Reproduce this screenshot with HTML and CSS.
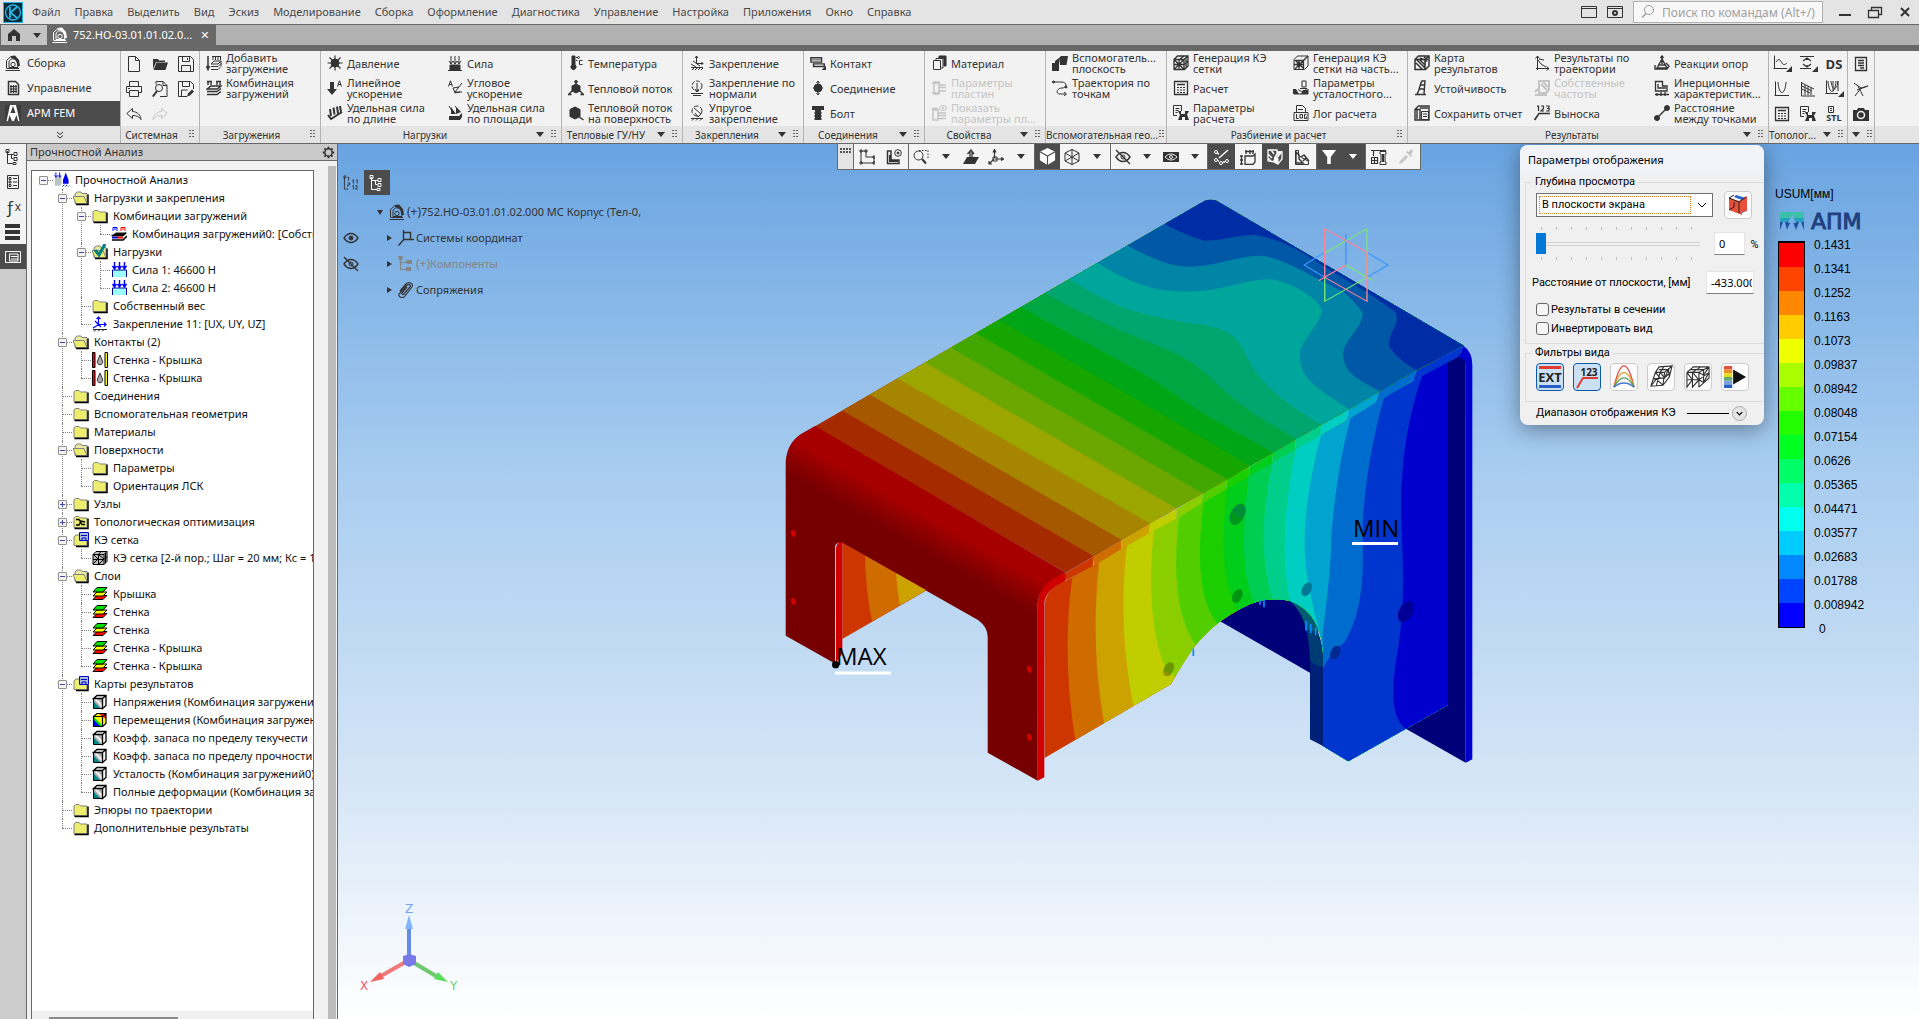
FILE: index.html
```html
<!DOCTYPE html>
<html lang="ru">
<head>
<meta charset="utf-8">
<title>752.НО-03.01.01.02.000 МС Корпус</title>
<link rel="stylesheet" href="styles.css">
</head>
<body>
<svg class="sprite" aria-hidden="true">
  <symbol id="asm" viewBox="0 0 16 16"><path d="M1.500 13V5.500L6 1.500M1.500 13.500H14M.500 15.500H15" /><path d="M4 12.500V7C5 3 10 3 12 6l1 6.500z"/><path d="M6 1l4-.500 4 4.500 1 6h-2.500C12.500 7 11 4 6 3z" fill="currentColor" stroke="none"/><circle cx="8" cy="9.500" r="2.200"/></symbol>
  <symbol id="mgmt" viewBox="0 0 16 16"><path d="M3.500 1.500h7l3 3v10h-10z" stroke-width="1.500"/><path d="M5 6.500h7M5 9h7M5 11.500h7M6 5v8M8.500 5v8M11 5v8" stroke-width="1.200"/></symbol>
  <symbol id="apm" viewBox="0 0 16 16"><path d="M0 0h16v16H0z" fill="#fff" stroke="none"/><path d="M0 0h5L1.500 16H0zM16 0h-5l3.500 16H16zM8 1L5.500 8h5zM4.500 10L7 16H3zM11.500 10L13 16H9z" fill="#3c3c3c" stroke="none"/></symbol>
  <symbol id="new" viewBox="0 0 16 16"><path d="M2.500.5h7l4 4v11h-11zM9.500.5v4h4"/></symbol>
  <symbol id="open" viewBox="0 0 16 16"><path d="M1 3h5l1 1.500h6V6H4L1 13zM4.500 6.500H16L13.500 14H1.500z" fill="currentColor" stroke="none"/></symbol>
  <symbol id="save" viewBox="0 0 16 16"><path d="M.500.500h12l3 3v12H.500zM4.500.500v5h7v-5M3.500 15.500v-6h9v6M9.500 2v2"/></symbol>
  <symbol id="print" viewBox="0 0 16 16"><path d="M3.500 5V.500h9V5M3.500 11.500H.500v-6h15v6h-3M3.500 9.500h9v6h-9zM2 7.500h2"/></symbol>
  <symbol id="preview" viewBox="0 0 16 16"><path d="M4 3.500V.500h7l4 4v11H8M11 .500v4h4"/><circle cx="7" cy="7" r="3.500"/><path d="M5 10L.800 15.500" stroke-width="2"/></symbol>
  <symbol id="saveas" viewBox="0 0 16 16"><path d="M9 15.500H.500V.500h12l3 3V8M4.500.500v5h7v-5M3.500 15v-6h6"/><path d="M9 15.500l1-3 4-4 2 2-4 4z" fill="currentColor" stroke="none"/></symbol>
  <symbol id="undo" viewBox="0 0 16 16"><path d="M6.500 2.500L.800 7.500l5.700 5V9.500c4 0 6.500 1 8.500 4C14.500 9 11.500 5.800 6.500 5.500z"/></symbol>
  <symbol id="addload" viewBox="0 0 16 16"><path d="M2 1v13M.500 11L2 14.500 3.500 11" stroke-width="1.500"/><path d="M6 1.500h9M7 1v4M9.500 1v4M12 1v4M14.500 1v4M5 9l3-3h7l-3 3zM5 11.500h7l3-3M5 14.500h7l3-3M15 6v5"/></symbol>
  <symbol id="combo" viewBox="0 0 16 16"><path d="M1 1.500h5M10 1.500h5M2 1v4M5 1v4M11 1v4M14 1v4" stroke-width="1.400"/><path d="M1 9l4-3h10l-4 3zM1 11.500h10l4-3M1 14.500h10l4-3" stroke-width="1.400"/></symbol>
  <symbol id="press" viewBox="0 0 16 16"><circle cx="8" cy="8" r="4" fill="currentColor"/><path d="M8 .500v15M.500 8h15M2.500 2.500l11 11M13.500 2.500l-11 11" stroke-width="1.200"/></symbol>
  <symbol id="force" viewBox="0 0 16 16"><path d="M3 10h10v5H3z" fill="currentColor"/><path d="M4 1v8M8 1v8M12 1v8M2 6l2 3 2-3M6 6l2 3 2-3M10 6l2 3 2-3M1 15.500h14"/></symbol>
  <symbol id="linacc" viewBox="0 0 16 16"><path d="M3 2h4v7h3l-5 6-5-6h3z" fill="currentColor" stroke="none"/><path d="M10.500 6.500L12.500.800l2 5.700M11 4.500h3"/></symbol>
  <symbol id="angacc" viewBox="0 0 16 16"><path d="M1.500 6.500L3.500.800l2 5.700M2 4.500h3M15 3L8 12h7M6 8l2 5 5-1M6 8l6-1"/></symbol>
  <symbol id="flen" viewBox="0 0 16 16"><path d="M1 10l3 4L15 7M3 4l1 7M6.500 2.500l1 7M10 1.500l1 7M13 1l1 6" stroke-width="2"/></symbol>
  <symbol id="farea" viewBox="0 0 16 16"><path d="M2 11h10l3-3v4l-2 3H2zM4 2l5 7H4zM9 2l5 5-5 2z" fill="currentColor" stroke="none"/><path d="M2 1l5 8M8 1l5 6"/></symbol>
  <symbol id="temp" viewBox="0 0 16 16"><path d="M4 1h3v9a2.500 2.500 0 1 1-3 0z" fill="currentColor"/><path d="M14.500 5.500h-3v4h3M8 2.500h2M8 5.500h1.500"/><circle cx="10.500" cy="2.500" r="1"/></symbol>
  <symbol id="heat" viewBox="0 0 16 16"><path d="M8 4l4 2v5l-4 2-4-2V6z" fill="currentColor"/><path d="M8 5V.500M6.500 2.500L8 .500l1.500 2M4 11l-3.500 3.500h3M12 11l3.500 3.500h-3" stroke-width="1.500"/></symbol>
  <symbol id="heats" viewBox="0 0 16 16"><path d="M7 2l5 2.500v7L7 14l-5-2.500v-7z" fill="currentColor"/><path d="M10 11l5.500 4M7 2v4" stroke-width="1.500"/></symbol>
  <symbol id="fix" viewBox="0 0 16 16"><path d="M7.500 9V1M6 3l1.500-2L9 3M7.500 8.500H14M12.500 7L14 8.500 12.500 10M4 6l7 5M2 12.500h12M3 15l2-2M6 15l2-2M9 15l2-2M12 15l2-2M2 9l5 3"/></symbol>
  <symbol id="fixn" viewBox="0 0 16 16"><circle cx="8" cy="6" r="5" stroke-dasharray="4 1.500"/><path d="M8 3v9M6 9l2 3 2-3M2 13.500h12M4 15.500h8"/></symbol>
  <symbol id="fixe" viewBox="0 0 16 16"><circle cx="8" cy="6" r="5" stroke-dasharray="5 1.500"/><path d="M5 3l7 6-3 3-3-4M2 13.500h12M3 15.500l2-2M7 15.500l2-2M11 15.500l2-2"/></symbol>
  <symbol id="contact" viewBox="0 0 18 16"><path d="M1 2h12v5H1zM4 9h12v3H4z" stroke-width="1.600"/><path d="M2 4.500h10"/><path d="M18 11v5h-5z" fill="currentColor" stroke="none"/></symbol>
  <symbol id="joint" viewBox="0 0 16 16"><circle cx="8" cy="8" r="4" fill="currentColor"/><path d="M8 1v14M3 8h10M6.500 3L8 1l1.500 2M6.500 13L8 15l1.500-2"/></symbol>
  <symbol id="bolt" viewBox="0 0 16 16"><path d="M2 1h12v4h-3v10H5V5H2z" fill="currentColor" stroke="none"/><path d="M4 8h8M4 11h8M4 14h8"/></symbol>
  <symbol id="mat" viewBox="0 0 16 16"><path d="M2.500 5.500h7v9h-7zM5 5V3.500h7V13h-2"/><path d="M8 1h7v10h-2V3H8z" fill="currentColor"/></symbol>
  <symbol id="plate" viewBox="0 0 16 16"><path d="M3 2h5v12H3zM1 3h8M1 13h8M8 5h7M8 7.500h7M8 11h7" stroke-width="1.500"/></symbol>
  <symbol id="platev" viewBox="0 0 16 16"><path d="M2 5h5v10H2zM1 3.500h6M7 8h8M7 10.500h8M7 13.500h8" stroke-width="1.500"/><ellipse cx="12" cy="3" rx="3.500" ry="2.500"/><circle cx="12" cy="3" r=".800"/></symbol>
  <symbol id="auxpl" viewBox="0 0 16 16"><path d="M0 8h7v8H0zM7 3l2-2h7l-1.500 9H8zM3 6l4-3v5H3z" fill="currentColor" stroke="none"/></symbol>
  <symbol id="traj" viewBox="0 0 16 16"><path d="M1 2h8c7 0 6 6 1 6S3 14 8 14h6M12 12l2.500 2-2.500 2"/><circle cx="1.500" cy="2" r="1" fill="currentColor"/><circle cx="14" cy="7" r="1" fill="currentColor"/></symbol>
  <symbol id="mesh" viewBox="0 0 16 16"><path d="M1 4.500h10v10H1zM1 4.500L4.500 1H15v10l-3.500 3.500M11 4.500L15 1M1 4.500l10 10M11 4.500l-10 10M6 4.500v10M1 9.500h10l4-3.500M7 4l4-3M13 3v10" stroke-width="1.300"/></symbol>
  <symbol id="mesh2" viewBox="0 0 16 16"><path d="M1 4.500L4.500 1H15v10l-3.500 3.500H1z"/><path d="M1.500 5.500h9v9M2 14l9-9M3 6l8 8M1 9.500h9M6 5v10M11 5l4-4" stroke-width="1.300"/><circle cx="6" cy="9.500" r="2"/></symbol>
  <symbol id="calc" viewBox="0 0 16 16"><path d="M1.500 1.500h13v13h-13zM4 4.500h8" stroke-width="1.300"/><path d="M4 7.500h8M4 10h8M4 12.500h8" stroke-dasharray="2 1"/></symbol>
  <symbol id="pcalc" viewBox="0 0 16 16"><path d="M8.500 6V.500h-8v10H4M2.500 3.500h4M2.500 5.500h3M2.500 7.500h2"/><path d="M5 6h3v3h4V6h4l-2 3.500L16 15h-4v-3H9v3H5l2-5z" fill="currentColor" stroke="none"/></symbol>
  <symbol id="fat" viewBox="0 0 16 16"><path d="M9 1h4v6H9zM7 8.500h7l-4 4L5 9.500M1 14h14V9"/><path d="M0 9h3l3 5H0zM10 10h5v4H8z" fill="currentColor" stroke="none"/></symbol>
  <symbol id="log" viewBox="0 0 16 16"><path d="M3.500 7V.500h6l3 3V7M1 7.500h14v8H1zM5 4.500h5M3.500 9v4.500h2M7 9.500h2.500v3.500H7zM13.500 9.500h-2v4h2v-2"/></symbol>
  <symbol id="map" viewBox="0 0 16 16"><path d="M1 4.500h10v10H1zM1 4.500L4.500 1H15v10l-3.500 3.500M11 4.500L15 1M2 8l6 6M3 5l8 8M6 5l5 5M6 3l7 3M10 2l4 3" stroke-width="1.500"/></symbol>
  <symbol id="stab" viewBox="0 0 16 16"><path d="M1 14.500h11M3 14C6 11 5 5 8 1h3l-1 13M6 5h4M5 9h5" stroke-width="1.400"/></symbol>
  <symbol id="rep" viewBox="0 0 16 16"><path d="M1 4.500L4.500 1H15v14H1zM1 4.500h5v10M3 5v9M6 3h8" stroke-width="1.400"/><path d="M7.500 6.500h7v8h-7zM9 9h4M9 11.500h4"/></symbol>
  <symbol id="restr" viewBox="0 0 16 16"><path d="M3.500 15V1M1.500 3.500l2-2.500 2 2.500M2 13.500h13M12.500 11.500l2.500 2-2.500 2M4 5l3 4 5 3M5 4l5 1"/></symbol>
  <symbol id="eig" viewBox="0 0 16 16"><path d="M5 1h10v9l-3 3H5zM7 4l6 6M9 2l5 5M1 15h12M1 12l4-4" stroke-width="2"/></symbol>
  <symbol id="callout" viewBox="0 0 16 16"><path d="M.500 15L5 8.500h11" stroke-width="1.600"/><path d="M3 1.500L4.500 1v5M7 1h2.500v2.500L7 6h3M12 1h3v5h-3M13 3.500h2" stroke-width="1.200"/></symbol>
  <symbol id="react" viewBox="0 0 16 16"><path d="M8 4L3 13h10zM1 10v4h12l2-3-3-3M8 1v8M6.500 3L8 1l1.500 2M5 10h6" stroke-width="1.400"/></symbol>
  <symbol id="inert" viewBox="0 0 16 16"><path d="M1.500 1.500h7V6H13v5H1.500zM4 4v4h8M1 14.500h14M3 13v3M7 12v4M11 12v4" stroke-width="1.300"/></symbol>
  <symbol id="dist" viewBox="0 0 16 16"><path d="M3 13L13 3" stroke-width="1.500"/><circle cx="3" cy="13" r="2.500" fill="currentColor"/><circle cx="13" cy="3" r="2.500" fill="currentColor"/></symbol>
  <symbol id="g1" viewBox="0 0 19 17"><path d="M1.500.5v13M.5 13.500H14M3 7c3-5 5-1 6 1s3 2 5 0"/><path d="M19 11v6h-6z" fill="currentColor" stroke="none"/></symbol>
  <symbol id="g2" viewBox="0 0 19 17"><path d="M1 1.500h14M1 13.500h11M4 6l4-3 4 3M4 9l4 3 4-3M8 3v2M8 10v2" stroke-width="1.200"/><path d="M19 11v6h-6z" fill="currentColor" stroke="none"/></symbol>
  <symbol id="g3" viewBox="0 0 16 16"><path d="M1.500.5v14M.5 14.500H15M4 1c1 14 7 14 8 0"/></symbol>
  <symbol id="g4" viewBox="0 0 16 16"><path d="M1.500 1v14H15M2 2l12 6M2 5l10 5M2 8l8 4M5 4v10M8 5v9M11 7v7"/></symbol>
  <symbol id="g5" viewBox="0 0 19 17"><path d="M1.500.5v13M.5 13.500H13M3 1c1 14 7 14 8 0M6 1c1 10 6 10 7 0M8 1v10M13 1v10"/><path d="M19 11v6h-6z" fill="currentColor" stroke="none"/></symbol>
  <symbol id="stl" viewBox="0 0 8 8"><path d="M1.500.5h5v6h-5zM3 2.500h2M3 4.500h2"/></symbol>
  <symbol id="doc" viewBox="0 0 16 16"><path d="M2.500 1.500h11v13h-11zM5 4.500h6M5 7h6M5 9.500h6M7 12h4" stroke-width="1.300"/></symbol>
  <symbol id="tri" viewBox="0 0 16 16"><path d="M1 2l7 5 7-2M8 7l-6 8M5 5l5 10M4 9l11-4"/></symbol>
  <symbol id="cam" viewBox="0 0 16 16"><path d="M0 4h4l1-2h6l1 2h4v11H0z" fill="currentColor" stroke="none"/><circle cx="8" cy="9" r="3.500" stroke="#f2f2f2" stroke-width="1.500"/></symbol>
  <symbol id="gear" viewBox="0 0 16 16"><circle cx="8" cy="8" r="4.500" stroke-width="1.800"/><path d="M8 1v2.500M8 12.500V15M1 8h2.500M12.500 8H15M3 3l2 2M11 11l2 2M13 3l-2 2M5 11l-2 2" stroke-width="2.200"/></symbol>
  <symbol id="tree" viewBox="0 0 16 16"><path d="M2.500 2v12.500h5M2.500 5.500h6M8.500 9.500h-2V5"/><path d="M1 .5h3v3H1zM9 3.500h3v3H9zM9 8.500h3v3H9zM8 13.500h3v2H8z"/></symbol>
  <symbol id="props" viewBox="0 0 16 16"><path d="M2.500 1.500h11v13h-11zM8 4.500h4M8 8h4M8 11.500h4M4 3.500h2v2H4zM4 7h2v2H4zM4 10.500h2v2H4z"/></symbol>
  <symbol id="bars" viewBox="0 0 16 16"><path d="M0 0h15v4H0zM0 6h15v4H0zM0 12h15v4H0z" fill="currentColor" stroke="none"/></symbol>
  <symbol id="panel" viewBox="0 0 16 16"><path d="M.5 2.500h15v11H.5zM4.500 5v7M4.500 5H13v7H4.500M6 7.500h7M6 10h7"/></symbol>
  <symbol id="numtree" viewBox="0 0 17 16"><path d="M1.500 2v12.500h4M1 .5h2v2H1zM5 2.500l1-1v4M5 8h2v2H5v2M10 5l1-.5v4M14 5l1-.5v4M10 11l1-.5v4M13 11h2v1.500l-2 2h2.500"/></symbol>
  <symbol id="eye" viewBox="0 0 16 12"><path d="M1 6c4-6 10-6 14 0-4 6-10 6-14 0z" stroke-width="1.400"/><circle cx="8" cy="6" r="2" fill="currentColor"/></symbol>
  <symbol id="eyeoff" viewBox="0 0 16 16"><path d="M1 8c4-6 10-6 14 0-4 6-10 6-14 0zM1 1l14 14" stroke-width="1.400"/><circle cx="8" cy="8" r="2"/></symbol>
  <symbol id="csys" viewBox="0 0 16 16"><path d="M5.500 2.500h7v7h-7zM5.500 0v10L.5 15.500M5 9.500h11" stroke-width="1.400"/></symbol>
  <symbol id="comp" viewBox="0 0 16 16"><path d="M2.500 2v11.500h6M2.500 6.500h8" stroke-width="1.200"/><path d="M0 0h5l-1 4H1zM8 4h6v4H9zM8 11h5v4H8z" fill="currentColor" stroke="none"/></symbol>
  <symbol id="clip" viewBox="0 0 16 16"><path d="M2 9l6-7c3-3 8 0 6 3l-7 9c-2 3-7 1-6-2l8-9c2-1 4 0 3 2l-6 7c-1 1-3 0-2-1l5-6" stroke-width="1.200"/></symbol>
  <symbol id="t1" viewBox="0 0 16 16"><path d="M2 2v12h13V8H7V2z"/><path d="M1 1h2v2H1zM6 1h2v2H6zM1 13h2v2H1zM14 13h2v2h-2zM14 7h2v2h-2z"/></symbol>
  <symbol id="t2" viewBox="0 0 16 16"><path d="M1.500 2v12.500H13V11H5V2z" stroke-width="1.500"/><path d="M3 6h2v5h7v2H3z" fill="currentColor" stroke="none"/><circle cx="12" cy="4" r="3.300"/><circle cx="12" cy="4" r="1" fill="currentColor"/></symbol>
  <symbol id="t3" viewBox="0 0 16 16"><circle cx="5.500" cy="6.500" r="4.500"/><path d="M9 10l4 4.500" stroke-width="2"/><path d="M6 1.500h9v9" stroke-dasharray="1.500 1.500"/></symbol>
  <symbol id="t4" viewBox="0 0 16 16"><path d="M4 8h12l-4 7H0z" fill="currentColor" stroke="none"/><path d="M7 11V2M4.500 5L8 1l3 4M9 11V3" stroke-width="1.300"/></symbol>
  <symbol id="t5" viewBox="0 0 16 16"><path d="M6.500 9.500V2M5 3.500l1.500-3L8 3.500M7 10h8M13 8.500l2.500 1.500-2.500 1.500M6 10l-5 5M1 12v3h3" stroke-width="1.200"/><path d="M5 8h4v4H5z"/></symbol>
  <symbol id="cube" viewBox="0 0 20 20"><path d="M10 1l8 4v9l-8 5-8-5V5z" fill="#fff" stroke="none"/><path d="M2 5l8 4.500L18 5M10 9.500V19" stroke="#4c4c4c" stroke-width="1.200"/></symbol>
  <symbol id="cubew" viewBox="0 0 16 16"><path d="M8 .5l7 3.500v8l-7 3.500L1 12V4zM1 4l7 4 7-4M8 8v8M1 12l7-4 7 4M8 0v8"/></symbol>
  <symbol id="t6" viewBox="0 0 16 16"><path d="M0 3h16v10H0z" fill="currentColor" stroke="none"/><path d="M2 8c4-4 8-4 12 0-4 4-8 4-12 0z" stroke="#f2f2f2"/><circle cx="8" cy="8" r="1.500" stroke="#f2f2f2"/></symbol>
  <symbol id="t7" viewBox="0 0 16 16"><circle cx="3" cy="3" r="1.500"/><circle cx="3" cy="11" r="1.500"/><circle cx="8" cy="14" r="1.500"/><circle cx="14" cy="12" r="1.500"/><path d="M6 9l9-8M4 4l2 1M5 12h1M10 13h2" stroke-width="1.400"/></symbol>
  <symbol id="t8" viewBox="0 0 16 16"><path d="M5 7h8l2-2v8l-2 2.500H5zM5 2.500h9M6 1v4M10 1v4M13 1v4M1.500 7v8M0 7h3M0 15h3M0 11h3" stroke-width="1.300"/></symbol>
  <symbol id="t9" viewBox="0 0 16 16"><path d="M1 1h9v12l-9-1zM1 5l4 4M1 9l3 3M4 1l3 4M8 8l3-5h4v7l-4 5-4-2z" stroke-width="1.300"/><path d="M8 8l3 1v6l-4-2zM11 3h4l-4 5z" fill="currentColor"/></symbol>
  <symbol id="t10" viewBox="0 0 16 16"><path d="M1.500 1.500h3v5l10 6v3h-13z"/><path d="M2 3l3 3v4l4 4H2zM7 8l3-2 5 6M9 12l3-3" stroke-width="1.400"/></symbol>
  <symbol id="funnel" viewBox="0 0 18 18"><path d="M1 1h16l-6 8v8H7V9z" fill="currentColor" stroke="none"/></symbol>
  <symbol id="t11" viewBox="0 0 16 16"><path d="M0 1.500h15M2.500 2v5M.5 8.500h6v6h-6zM.5 11.500h6M3.500 8.500v6" stroke-width="1.200"/><path d="M9 2.500h6V5h-1v8h1v2.500H9V13h1V5H9z"/><path d="M12 5v8" stroke-width="2"/></symbol>
  <symbol id="pip" viewBox="0 0 16 16"><path d="M1 15l1-3 6-6 2 2-6 6zM8 3l5 5 1-1-1.500-1.500C16 3 15 0 13 .5L10.500 3 9 2z" fill="currentColor" stroke="none"/></symbol>
  <symbol id="fold" viewBox="0 0 16 16"><path d="M1 13.500V4l1.500-1.500H6L7.500 4H14v9.500z" fill="#eeee6e" stroke="#808080"/><path d="M1.500 14.500H15V4.500" stroke="#000" stroke-width="1.500"/></symbol>
  <symbol id="fopen" viewBox="0 0 16 16"><path d="M2 13.500V4l2-2h4L9 3.500h5v10z" fill="#e9e9a0" stroke="#808080"/><path d="M0 6.500h11l3 7H3z" fill="#eeee6e" stroke="#808080"/><path d="M3 14.500h12V4.500" stroke="#000" stroke-width="1.500"/></symbol>
  <symbol id="fsave" viewBox="0 0 16 16"><path d="M1 13.500V5l2-2h5v4h6v6.500z" fill="#eeee6e" stroke="#808080"/><path d="M6.500.5h9v8h-9z" fill="#a9b9d9" stroke="#00c"/><path d="M8 3.500h6M9 8V6h4v2" stroke="#00c"/><path d="M3 14.500h12V9" stroke="#000" stroke-width="1.500"/></symbol>
  <symbol id="fcheck" viewBox="0 0 16 16"><use href="#fopen"/><path d="M3 6l4 5 6-11" stroke="#008080" stroke-width="3"/></symbol>
  <symbol id="ftopo" viewBox="0 0 16 16"><use href="#fold"/><path d="M3 5.500h3l3 5h3M3 11h3l2-4 4 1" stroke="#000" stroke-width="1.300"/></symbol>
  <symbol id="root" viewBox="0 0 17 16"><path d="M1 5l3-1h4v9l-3 1H1z" fill="#b8c4c4" stroke="none"/><path d="M2 0v5M6 0v5M.5 3L2 5l1.500-2M4.500 3L6 5l1.500-2" stroke="#00f"/><path d="M12.500 0l3 8v4h-6V8z" fill="#00e" stroke="none"/><path d="M9 15l2-2M12 15l2-2M15 15l1-1" stroke="#00c"/></symbol>
  <symbol id="ldcomb" viewBox="0 0 16 16"><path d="M2 5V1.500h4V5M4 1v3" stroke="#00f"/><path d="M10 5V1.500h4V5M12 1v3" stroke="red"/><path d="M1 9.500l4-3h11l-4 3z" fill="#111" stroke="none"/><path d="M1 10.500h6v2H1z" fill="#00c" stroke="none"/><path d="M7 10.500h5v2H7z" fill="red" stroke="none"/><path d="M1 14h11l4-4M.5 9.500h11.500l3-2.500" stroke="#000" stroke-width="1.600"/></symbol>
  <symbol id="ld" viewBox="0 0 16 16"><path d="M1.500 15V8h14v7" fill="#9ff" stroke="#008"/><path d="M3.500 0v7M8.500 0v7M13.500 0v7M1.500 4l2 3 2-3M6.500 4l2 3 2-3M11.500 4l2 3 2-3" stroke="#00f" stroke-width="1.400"/></symbol>
  <symbol id="fixb" viewBox="0 0 16 16"><path d="M6.500 10V1M4.500 3l2-2 2 2M6.500 8.500H14M12 6.500l2 2-2 2M6 9l-5 3M3 5l6 6" stroke="#00f" stroke-width="1.200"/><path d="M1 13.500h14M2 15.500l2-2M6 15.500l2-2M10 15.500l2-2" stroke="#222"/></symbol>
  <symbol id="cont" viewBox="0 0 16 16"><path d="M.5.5h2.500v15H.5z" fill="red" stroke="#000"/><path d="M13 .5h2.500v15H13z" fill="#ff0" stroke="#000"/><path d="M8 3l2.500 6a2.700 2.700 0 1 1-5 0z" fill="#aaa" stroke="#333"/></symbol>
  <symbol id="grid" viewBox="0 0 16 16"><path d="M1 4.500L4 1.500h11v10L12 14.500H1z" fill="#bbb" stroke="#000"/><path d="M1 4.500h11v10M12 4.500l3-3M1 9.500h11l3-3M6.500 4.500v10M6.500 4.500L9 1.500M1 14l5-5M7 14l5-5M2 5l4 4M7 5l5 4M13.500 3v10" stroke="#000"/></symbol>
  <symbol id="lay" viewBox="0 0 16 16"><path d="M1 13.500l4-4h10l-4 4z" fill="red" stroke="#000"/><path d="M1 10l4-4h10l-4 4z" fill="#ff0" stroke="#000"/><path d="M1 6l4-4.500h10L11 6z" fill="#0d0" stroke="#000"/></symbol>
  <symbol id="res" viewBox="0 0 16 16"><path d="M1.500 4.500h9v10h-9z" fill="#aaa" stroke="#000"/><path d="M2 8l6 6H2z" fill="#088" stroke="none"/><path d="M2 5h3l5 5v4z" fill="#eee" stroke="none"/><path d="M1.500 4.500L5 1.500h9v10l-3.500 3v-10zM10.500 4.500L14 1.500" fill="#f4f4f4" stroke="#000" stroke-width="1.300"/></symbol>
  <symbol id="resc" viewBox="0 0 16 16"><path d="M1.500 4.500L5 1.500h9v10l-3.500 3h-9z" fill="#ff0" stroke="none"/><path d="M2 7l7 7H2z" fill="#00f" stroke="none"/><path d="M2 5l9 9H8L2 8z" fill="#0d0" stroke="none"/><path d="M7 2h7v5z" fill="red" stroke="none"/><path d="M1.500 4.500h9v10h-9zM1.500 4.500L5 1.500h9v10l-3.500 3M10.500 4.500L14 1.500" stroke="#000" stroke-width="1.200"/></symbol>
</svg>

<header>
  <nav class="menubar">
    <svg class="logo" viewBox="0 0 20 21"><path d="M0 0h20v21H0z" fill="#0d2a3a" stroke="#28b8e8" stroke-width="2"/><circle cx="10" cy="10.500" r="7.500" stroke="#28b8e8" stroke-width="1.300"/><path d="M7 5v11M14 5l-6.500 5.500L14 16" stroke="#28b8e8" stroke-width="1.800"/></svg>
    <button>Файл</button><button>Правка</button><button>Выделить</button><button>Вид</button><button>Эскиз</button><button>Моделирование</button><button>Сборка</button><button>Оформление</button><button>Диагностика</button><button>Управление</button><button>Настройка</button><button>Приложения</button><button>Окно</button><button>Справка</button>
    <div class="winctl">
      <svg class="i" viewBox="0 0 16 16"><path d="M.5 2.500h15v11H.5zM.5 4.500h15"/></svg>
      <svg class="i" viewBox="0 0 16 16"><path d="M.5 2.500h15v11H.5zM.5 4.500h15"/><circle cx="8" cy="9" r="2" stroke-width="2"/></svg>
      <label class="search"><svg class="i" viewBox="0 0 16 16"><circle cx="9" cy="6" r="4.500"/><path d="M6 9.500l-4 4" stroke-width="1.500"/></svg><input type="text" placeholder="Поиск по командам (Alt+/)" aria-label="Поиск"></label>
      <svg class="i wb" viewBox="0 0 16 16"><path d="M2 11h12" stroke-width="2"/></svg>
      <svg class="i wb" viewBox="0 0 16 16"><path d="M1.500 6.500h10v7h-10zM4.500 6V3.500h10v7H12M1 6.500h11" stroke-width="1.300"/></svg>
      <svg class="i wb" viewBox="0 0 16 16"><path d="M4 4l8 8M12 4l-8 8" stroke-width="2"/></svg>
    </div>
  </nav>
  <div class="tabs">
    <button class="home" aria-label="Домой"><svg class="i" viewBox="0 0 16 16"><path d="M2 7l6-5 6 5v7h-4V9H6v5H2z" fill="currentColor" stroke="none"/></svg><span class="caret"></span></button>
    <button class="tab"><svg class="i"><use href="#asm"/></svg><span>752.НО-03.01.01.02.0...</span><b>✕</b></button>
  </div>
  <div class="ribbon">
    <section class="modes">
      <button><svg class="i"><use href="#asm"/></svg>Сборка</button>
      <button><svg class="i"><use href="#mgmt"/></svg>Управление</button>
      <button class="on"><svg class="i"><use href="#apm"/></svg>APM FEM</button>
      <footer><svg class="i" viewBox="0 0 16 16"><path d="M5 5l3 2.500L11 5M5 8.500l3 2.500 3-2.500"/></svg></footer>
    </section>
    <section class="tools w2">
      <div class="ic3"><button aria-label="Создать"><svg class="i"><use href="#new"/></svg></button><button aria-label="Открыть"><svg class="i"><use href="#open"/></svg></button><button aria-label="Сохранить"><svg class="i"><use href="#save"/></svg></button><button aria-label="Печать"><svg class="i"><use href="#print"/></svg></button><button aria-label="Просмотр"><svg class="i"><use href="#preview"/></svg></button><button aria-label="Сохранить как"><svg class="i"><use href="#saveas"/></svg></button><button aria-label="Отменить"><svg class="i"><use href="#undo"/></svg></button><button class="off" aria-label="Повторить"><svg class="i flip"><use href="#undo"/></svg></button></div>
      <footer><span>Системная</span><i class="dots"></i></footer>
    </section>
    <section class="w3">
      <div class="cells"><button><svg class="i"><use href="#addload"/></svg><span>Добавить<br>загружение</span></button><button><svg class="i"><use href="#combo"/></svg><span>Комбинация<br>загружений</span></button></div>
      <footer><span>Загружения</span><i class="dots"></i></footer>
    </section>
    <section class="w6">
      <div class="cells"><button><svg class="i"><use href="#press"/></svg><span>Давление</span></button><button><svg class="i"><use href="#linacc"/></svg><span>Линейное<br>ускорение</span></button><button><svg class="i"><use href="#flen"/></svg><span>Удельная сила<br>по длине</span></button><button><svg class="i"><use href="#force"/></svg><span>Сила</span></button><button><svg class="i"><use href="#angacc"/></svg><span>Угловое<br>ускорение</span></button><button><svg class="i"><use href="#farea"/></svg><span>Удельная сила<br>по площади</span></button></div>
      <footer><span>Нагрузки</span><i class="caret"></i><i class="dots"></i></footer>
    </section>
    <section class="w3">
      <div class="cells"><button><svg class="i"><use href="#temp"/></svg><span>Температура</span></button><button><svg class="i"><use href="#heat"/></svg><span>Тепловой поток</span></button><button><svg class="i"><use href="#heats"/></svg><span>Тепловой поток<br>на поверхность</span></button></div>
      <footer><span>Тепловые ГУ/НУ</span><i class="caret"></i><i class="dots"></i></footer>
    </section>
    <section class="w3">
      <div class="cells"><button><svg class="i"><use href="#fix"/></svg><span>Закрепление</span></button><button><svg class="i"><use href="#fixn"/></svg><span>Закрепление по<br>нормали</span></button><button><svg class="i"><use href="#fixe"/></svg><span>Упругое<br>закрепление</span></button></div>
      <footer><span>Закрепления</span><i class="caret"></i><i class="dots"></i></footer>
    </section>
    <section class="w3">
      <div class="cells"><button><svg class="i"><use href="#contact"/></svg><span>Контакт</span></button><button><svg class="i"><use href="#joint"/></svg><span>Соединение</span></button><button><svg class="i"><use href="#bolt"/></svg><span>Болт</span></button></div>
      <footer><span>Соединения</span><i class="caret"></i><i class="dots"></i></footer>
    </section>
    <section class="w3">
      <div class="cells"><button><svg class="i"><use href="#mat"/></svg><span>Материал</span></button><button class="off"><svg class="i"><use href="#plate"/></svg><span>Параметры<br>пластин</span></button><button class="off"><svg class="i"><use href="#platev"/></svg><span>Показать<br>параметры пл...</span></button></div>
      <footer><span>Свойства</span><i class="caret"></i><i class="dots"></i></footer>
    </section>
    <section class="w3">
      <div class="cells"><button><svg class="i"><use href="#auxpl"/></svg><span>Вспомогатель...<br>плоскость</span></button><button><svg class="i"><use href="#traj"/></svg><span>Траектория по<br>точкам</span></button></div>
      <footer class="long"><span>Вспомогательная гео...</span><i class="dots"></i></footer>
    </section>
    <section class="w6">
      <div class="cells"><button><svg class="i"><use href="#mesh"/></svg><span>Генерация КЭ<br>сетки</span></button><button><svg class="i"><use href="#calc"/></svg><span>Расчет</span></button><button><svg class="i"><use href="#pcalc"/></svg><span>Параметры<br>расчета</span></button><button><svg class="i"><use href="#mesh2"/></svg><span>Генерация КЭ<br>сетки на часть...</span></button><button><svg class="i"><use href="#fat"/></svg><span>Параметры<br>усталостного...</span></button><button><svg class="i"><use href="#log"/></svg><span>Лог расчета</span></button></div>
      <footer><span>Разбиение и расчет</span><i class="dots"></i></footer>
    </section>
    <section class="w9">
      <div class="cells"><button><svg class="i"><use href="#map"/></svg><span>Карта<br>результатов</span></button><button><svg class="i"><use href="#stab"/></svg><span>Устойчивость</span></button><button><svg class="i"><use href="#rep"/></svg><span>Сохранить отчет</span></button><button><svg class="i"><use href="#restr"/></svg><span>Результаты по<br>траектории</span></button><button class="off"><svg class="i"><use href="#eig"/></svg><span>Собственные<br>частоты</span></button><button><svg class="i"><use href="#callout"/></svg><span>Выноска</span></button><button><svg class="i"><use href="#react"/></svg><span>Реакции опор</span></button><button><svg class="i"><use href="#inert"/></svg><span>Инерционные<br>характеристик...</span></button><button><svg class="i"><use href="#dist"/></svg><span>Расстояние<br>между точками</span></button></div>
      <footer><span>Результаты</span><i class="caret"></i><i class="dots"></i></footer>
    </section>
    <section class="tools w2">
      <div class="ic3"><button aria-label="График"><svg class="i big"><use href="#g1"/></svg></button><button aria-label="Ограничения"><svg class="i big"><use href="#g2"/></svg></button><button class="ds">DS</button><button aria-label="Кривая"><svg class="i"><use href="#g3"/></svg></button><button aria-label="Ферма"><svg class="i"><use href="#g4"/></svg></button><button aria-label="Кривые"><svg class="i big"><use href="#g5"/></svg></button><button aria-label="Расчет"><svg class="i"><use href="#calc"/></svg></button><button aria-label="Параметры"><svg class="i"><use href="#pcalc"/></svg></button><button class="stl"><svg class="i"><use href="#stl"/></svg>STL</button></div>
      <footer><span>Тополог...</span><i class="caret"></i><i class="dots"></i></footer>
    </section>
    <section class="tools w1">
      <div class="ic3"><button aria-label="Отчет"><svg class="i"><use href="#doc"/></svg></button><button aria-label="Сечение"><svg class="i"><use href="#tri"/></svg></button><button aria-label="Снимок"><svg class="i"><use href="#cam"/></svg></button></div>
      <footer><i class="caret"></i><i class="dots"></i></footer>
    </section>
    <section class="rest"><div></div><footer></footer></section>
  </div>
</header>

<main>
  <nav class="strip">
    <button aria-label="Дерево"><svg class="i"><use href="#tree"/></svg></button>
    <button aria-label="Свойства"><svg class="i"><use href="#props"/></svg></button>
    <button class="fx">ƒ<sub>x</sub></button>
    <button aria-label="Слои"><svg class="i"><use href="#bars"/></svg></button>
    <button class="on" aria-label="Анализ"><svg class="i"><use href="#panel"/></svg></button>
  </nav>
  <aside class="panel">
    <h2><span>Прочностной Анализ</span><svg class="i"><use href="#gear"/></svg></h2>
    <div class="pbody">
      <div class="treebox">
        <ul class="tree">
          <li><div><i class="ex m"></i><svg class="i"><use href="#root"/></svg>Прочностной Анализ</div>
          <ul>
            <li><div><i class="ex m"></i><svg class="i"><use href="#fopen"/></svg>Нагрузки и закрепления</div>
              <ul>
                <li><div><i class="ex m"></i><svg class="i"><use href="#fold"/></svg>Комбинации загружений</div>
                  <ul><li><div><i class="ex"></i><svg class="i"><use href="#ldcomb"/></svg>Комбинация загружений0: [Собственный вес]</div></li></ul></li>
                <li><div><i class="ex m"></i><svg class="i"><use href="#fcheck"/></svg>Нагрузки</div>
                  <ul><li><div><i class="ex"></i><svg class="i"><use href="#ld"/></svg>Сила 1: 46600 Н</div></li><li><div><i class="ex"></i><svg class="i"><use href="#ld"/></svg>Сила 2: 46600 Н</div></li></ul></li>
                <li><div><i class="ex"></i><svg class="i"><use href="#fold"/></svg>Собственный вес</div></li>
                <li><div><i class="ex"></i><svg class="i"><use href="#fixb"/></svg>Закрепление 11: [UX, UY, UZ]</div></li>
              </ul></li>
            <li><div><i class="ex m"></i><svg class="i"><use href="#fopen"/></svg>Контакты (2)</div>
              <ul><li><div><i class="ex"></i><svg class="i"><use href="#cont"/></svg>Стенка - Крышка</div></li><li><div><i class="ex"></i><svg class="i"><use href="#cont"/></svg>Стенка - Крышка</div></li></ul></li>
            <li><div><i class="ex"></i><svg class="i"><use href="#fold"/></svg>Соединения</div></li>
            <li><div><i class="ex"></i><svg class="i"><use href="#fold"/></svg>Вспомогательная геометрия</div></li>
            <li><div><i class="ex"></i><svg class="i"><use href="#fold"/></svg>Материалы</div></li>
            <li><div><i class="ex m"></i><svg class="i"><use href="#fopen"/></svg>Поверхности</div>
              <ul><li><div><i class="ex"></i><svg class="i"><use href="#fold"/></svg>Параметры</div></li><li><div><i class="ex"></i><svg class="i"><use href="#fold"/></svg>Ориентация ЛСК</div></li></ul></li>
            <li><div><i class="ex m p"></i><svg class="i"><use href="#fold"/></svg>Узлы</div></li>
            <li><div><i class="ex m p"></i><svg class="i"><use href="#ftopo"/></svg>Топологическая оптимизация</div></li>
            <li><div><i class="ex m"></i><svg class="i"><use href="#fsave"/></svg>КЭ сетка</div>
              <ul><li><div><i class="ex"></i><svg class="i"><use href="#grid"/></svg>КЭ сетка [2-й пор.; Шаг = 20 мм; Кс = 1]</div></li></ul></li>
            <li><div><i class="ex m"></i><svg class="i"><use href="#fopen"/></svg>Слои</div>
              <ul><li><div><i class="ex"></i><svg class="i"><use href="#lay"/></svg>Крышка</div></li><li><div><i class="ex"></i><svg class="i"><use href="#lay"/></svg>Стенка</div></li><li><div><i class="ex"></i><svg class="i"><use href="#lay"/></svg>Стенка</div></li><li><div><i class="ex"></i><svg class="i"><use href="#lay"/></svg>Стенка - Крышка</div></li><li><div><i class="ex"></i><svg class="i"><use href="#lay"/></svg>Стенка - Крышка</div></li></ul></li>
            <li><div><i class="ex m"></i><svg class="i"><use href="#fsave"/></svg>Карты результатов</div>
              <ul><li><div><i class="ex"></i><svg class="i"><use href="#res"/></svg>Напряжения (Комбинация загружений0)</div></li><li><div><i class="ex"></i><svg class="i"><use href="#resc"/></svg>Перемещения (Комбинация загружений0)</div></li><li><div><i class="ex"></i><svg class="i"><use href="#res"/></svg>Коэфф. запаса по пределу текучести</div></li><li><div><i class="ex"></i><svg class="i"><use href="#res"/></svg>Коэфф. запаса по пределу прочности</div></li><li><div><i class="ex"></i><svg class="i"><use href="#res"/></svg>Усталость (Комбинация загружений0)</div></li><li><div><i class="ex"></i><svg class="i"><use href="#res"/></svg>Полные деформации (Комбинация загружений0)</div></li></ul></li>
            <li><div><i class="ex"></i><svg class="i"><use href="#fold"/></svg>Эпюры по траектории</div></li>
            <li><div><i class="ex"></i><svg class="i"><use href="#fold"/></svg>Дополнительные результаты</div></li>
          </ul></li>
        </ul>
        <div class="hscroll"></div>
      </div>
      <div class="vscroll"></div>
    </div>
  </aside>

  <section class="view">
    <svg class="scene" viewBox="338 144 1581 875" preserveAspectRatio="xMidYMid slice">
      <defs>
        <linearGradient id="roll" gradientUnits="userSpaceOnUse" x1="924" y1="552" x2="940" y2="524"><stop offset="0" stop-color="#760000"/><stop offset=".5" stop-color="#8c0000"/><stop offset="1" stop-color="#a60000"/></linearGradient>
        <clipPath id="top"><path d="M118 740L666 1178 727 1129 849 1030 1018 898 1168 777 1283 688 1430 571 1533 497 995 63Q982 56 968 63Z"/></clipPath>
        <clipPath id="side"><path d="M-167 495L-165 485Q-155 440-105 424L-20 376 63 328 148 278 228 235 305 188 380 145 446 108 516 66 585 27 663-16 745-62 835-118 945-180 1044-240V795L745 964 669 918V640Q667 585 645 545 620 500 570 482 530 473 480 482 430 495 362 543 320 575 287 615 250 665 213 732L-160 950-167 955Z"/></clipPath>
        <clipPath id="inner"><path d="M247 308L498 451 247 595Z"/></clipPath>
      </defs>
      <!-- far wall seen through the arch and the right flange -->
      <g transform="translate(1100 440) scale(.33333)">
        <path d="M350 538L640 704V450H350Z" fill="#000078"/>
        <path d="M1040-235L1085-262Q1097-262 1097-240V968L915 865 1040 780Z" fill="#000078"/>
        <path d="M1090-283Q1117-265 1117-225V958L1097 968V-225Q1095-250 1076-245Z" fill="#0000ce"/>
        <path d="M560 478C600 500 628 560 630 640V898L669 918V640C660 560 620 500 575 482Z" fill="#002078"/>
        <path d="M560 478C600 500 628 560 630 662Q645 678 669 680V640C660 560 620 500 575 482Z" fill="#003c74"/>
        <path d="M560 478Q600 500 622 570L660 575Q640 510 575 482Z" fill="#005c74"/>
      </g>
      <!-- side wall isobands -->
      <g transform="translate(1100 440) scale(.33333)" clip-path="url(#side)">
        <path d="M-200-400H1200V1100H-200Z" fill="#ce3600"/>
        <path d="M-83 410Q-115 640-75 895V1100H1200V-400H-83Z" fill="#ce6c00"/>
        <path d="M-2 362Q-30 610 12 848V1100H1200V-400H-2Z" fill="#cca200"/>
        <path d="M81 316Q52 560 100 797V1100H1200V-400H81Z" fill="#c0ce00"/>
        <path d="M162 268Q135 520 190 670L225 712V1100H1200V-400H162Z" fill="#8ace00"/>
        <path d="M238 225Q205 500 287 615V1100H1200V-400H238Z" fill="#52ce00"/>
        <path d="M312 180Q275 450 350 548V1100H1200V-400H312Z" fill="#1ace00"/>
        <path d="M382 140Q350 400 412 508V1100H1200V-400H382Z" fill="#00ce1a"/>
        <path d="M448 98Q410 370 462 490V1100H1200V-400H448Z" fill="#00ce52"/>
        <path d="M519 62Q465 300 515 475V1100H1200V-400H519Z" fill="#00ce8a"/>
        <path d="M589 20Q530 300 570 482V1100H1200V-400H589Z" fill="#00cec2"/>
        <path d="M666-25Q590 250 625 430 637 500 658 572V1100H1200V-400H666Z" fill="#00a4ce"/>
        <path d="M753-68Q715 60 695 270 693 400 668 575V1100H1200V-400H753Z" fill="#006cce"/>
        <path d="M853-130C815 0 785 180 788 300S785 520 735 605Q690 640 669 685V1100H1200V-400H853Z" fill="#0036ce"/>
        <path d="M968-197C910-30 900 120 905 260S915 480 895 620C870 760 875 830 915 865L940 1100H1200V-400H968Z" fill="#0000ce"/>
      </g>
      <!-- lit edge of the cover -->
      <g transform="translate(1100 440) scale(.33333)">
        <path d="M-102 398L-18 349-22 378-107 424Z" fill="#ce3600"/><path d="M-18 349L65 300 63 328-20 378Z" fill="#ce6c00"/><path d="M65 300L150 250 148 279 63 328Z" fill="#cca200"/><path d="M150 250L231 206 228 236 148 280Z" fill="#c0ce00"/><path d="M231 206L308 160 305 190 228 238Z" fill="#8ace00"/><path d="M308 160L382 117 379 147 305 192Z" fill="#52ce00"/><path d="M382 117L450 80 446 108 379 149Z" fill="#1ace00"/><path d="M450 80L520 38 516 68 446 110Z" fill="#00ce1a"/><path d="M520 38L588-2 585 28 516 70Z" fill="#00ce52"/><path d="M588-2L666-45 662-16 585 30Z" fill="#00ce8a"/><path d="M666-45L747-92 738-60 660-14Z" fill="#00cec2"/><path d="M747-92L838-146 826-112 738-58Z" fill="#00a4ce"/><path d="M838-146L950-209 938-178 826-110Z" fill="#006cce"/><path d="M950-209L1092-283 1076-250 938-176Z" fill="#0036ce"/>
      </g>
      <!-- cover top isobands -->
      <g transform="translate(760 180) scale(.45914 .33333)" clip-path="url(#top)">
        <path d="M118 740L666 1178 1700 1100V0H118Z" fill="#a62a00"/>
        <path d="M180 692L727 1129 1700 1100V0H180Z" fill="#a65800"/>
        <path d="M240 644L788 1080 1700 1100V0H240Z" fill="#a68500"/>
        <path d="M301 596L849 1030 1700 1100V0H301Z" fill="#9ca600"/>
        <path d="M360 548L908 986 1700 1100V0H360Z" fill="#6ca600"/>
        <path d="M416 503L964 940 1700 1100V0H416Z" fill="#42a600"/>
        <path d="M470 459L1018 898 1700 1100V0H470Z" fill="#16a600"/>
        <path d="M521 421Q780 625 1068 858L1700 1100V0H521Z" fill="#00a616"/>
        <path d="M571 382C680 472 820 560 900 640S1040 755 1117 818L1700 1100V0H571Z" fill="#00a642"/>
        <path d="M622 341C720 415 800 460 880 505S980 600 1030 655 1110 730 1168 777L1700 1100V0H622Z" fill="#00a66e"/>
        <path d="M674 297C760 370 800 400 940 430Q1020 440 1045 490C1060 530 1080 590 1120 635Q1160 685 1224 735L1700 1100V0H674Z" fill="#00a69c"/>
        <path d="M735 250C820 318 860 334 930 335 1010 335 1060 295 1115 298 1170 315 1205 350 1224 385 1225 430 1176 480 1176 525 1175 600 1220 630 1283 688L1700 1100V0H735Z" fill="#0085a6"/>
        <path d="M802 198C870 245 890 257 935 260 1000 258 1040 225 1095 227 1150 240 1200 290 1270 335Q1300 370 1313 400C1310 450 1270 480 1270 525 1275 590 1310 600 1349 634L1700 1100V0H802Z" fill="#0058a6"/>
        <path d="M882 133Q930 168 968 182C1020 180 1040 165 1078 165 1130 175 1180 215 1220 252L1320 335Q1365 375 1385 398C1395 440 1368 450 1370 500Q1390 540 1430 571L1700 1100V0H882Z" fill="#002ca6"/>
      </g>
      <!-- front wall -->
      <path d="M815 426L801 434Q787 443 785.700 461.700V635.700L835 663.500V547Q836 541 843 543.500L978 620Q987.700 627 987.700 637V752.700L1037.700 780.700V603Q1040 583 1066 572.700Z" fill="url(#roll)"/>
      <g transform="translate(760 440) scale(.33333)">
        <path d="M247 308L500 451 247 597Z" fill="#ce3600"/>
        <g clip-path="url(#inner)"><path d="M315 300Q312 440 340 560H600V300Z" fill="#ce6c00"/><path d="M408 380Q408 430 424 520H600V300Z" fill="#cca200"/></g>
        <path d="M228 668V325Q232 300 247 309V640Z" fill="#ce0000"/>
        <path d="M918 398Q835 425 833 495V1022L853 1012V490Q857 448 915 424Z" fill="#ce0000"/>
        <g fill="#d00000"><ellipse cx="100" cy="280" rx="7" ry="11" transform="rotate(-20 100 280)"/><ellipse cx="100" cy="484" rx="7" ry="11" transform="rotate(-20 100 484)"/><ellipse cx="808" cy="688" rx="7" ry="11" transform="rotate(-20 808 688)"/><ellipse cx="808" cy="892" rx="7" ry="11" transform="rotate(-20 808 892)"/></g>
        <circle cx="227" cy="674" r="11" fill="#000"/>
      </g>
      <g transform="translate(1100 440) scale(.33333)">
        <ellipse cx="413" cy="223" rx="21" ry="34" transform="rotate(28 413 223)" fill="#008e38"/>
        <path d="M396 218l32 17q-10 20-26 20-14-8-6-37z" fill="#009818"/>
        <ellipse cx="412" cy="468" rx="14" ry="22" transform="rotate(28 412 468)" fill="#009614"/>
        <ellipse cx="620" cy="448" rx="14" ry="22" transform="rotate(28 620 448)" fill="#007896"/>
        <ellipse cx="706" cy="638" rx="14" ry="22" transform="rotate(28 706 638)" fill="#002a92"/>
        <ellipse cx="206" cy="687" rx="14" ry="22" transform="rotate(28 206 687)" fill="#6a9600"/>
        <path d="M190 690l24 14q-8 6-18 3-8-6-6-17z" fill="#929400"/>
        <ellipse cx="918" cy="515" rx="21" ry="34" transform="rotate(28 918 515)" fill="#000096"/>
        <path d="M480 480v14M492 478v24M280 626v22M618 542v30M632 552v28M647 562v24" stroke="#0090ff" stroke-width="5"/>
      </g>
      <!-- origin planes -->
      <g transform="translate(760 180) scale(.45914 .33333)" fill="none" stroke-width="3">
        <path d="M1230 217L1185 255 1230 292M1322 217L1368 255 1322 292M1276 163V255" stroke="#3c96ff"/>
        <path d="M1322 146V292M1322 146L1230 219M1230 292V364L1322 292M1276 255L1335 302" stroke="#78e678"/>
        <path d="M1230 146V292L1322 364V217L1230 146M1276 255L1217 302" stroke="#ff8296"/>
      </g>
      <g class="mark"><text x="836" y="665">MAX</text><path d="M835 673h56" stroke="#fff" stroke-width="3"/><text x="1353" y="537">MIN</text><path d="M1352 543.500h46" stroke="#fff" stroke-width="3"/></g>
      <!-- axes triad -->
      <g>
        <path d="M409 955V928" stroke="#648ce6" stroke-width="4"/><path d="M409 915l4 14h-8z" fill="#82b4fa"/>
        <path d="M409 960L381 976" stroke="#f07878" stroke-width="4"/><path d="M370 982l10-10 4 7z" fill="#f06464"/>
        <path d="M409 960L436 976" stroke="#6ec86e" stroke-width="4"/><path d="M448 982l-14-3 4-7z" fill="#5adc5a"/>
        <path d="M403 956l6-2 7 2v8l-7 3-6-3z" fill="#7878e6"/>
        <g class="axis"><text x="405" y="913" fill="#78a0f0">Z</text><text x="360" y="990" fill="#f05a64">X</text><text x="450" y="990" fill="#6ed26e">Y</text></g>
      </g>
    </svg>

    <div class="mtree">
      <div class="mt-tools"><button aria-label="Нумерация"><svg class="i"><use href="#numtree"/></svg></button><button class="on" aria-label="Структура"><svg class="i"><use href="#tree"/></svg></button></div>
      <ul>
        <li><span class="vis"></span><i class="tri d"></i><svg class="i"><use href="#asm"/></svg><span><small>(+)</small>752.НО-03.01.01.02.000 МС Корпус (Тел-0,</span></li>
        <li class="sub"><span class="vis"><svg class="i"><use href="#eye"/></svg></span><i class="tri"></i><svg class="i"><use href="#csys"/></svg>Системы координат</li>
        <li class="sub"><span class="vis"><svg class="i"><use href="#eyeoff"/></svg></span><i class="tri"></i><span class="dim"><svg class="i"><use href="#comp"/></svg><span><small>(+)</small>Компоненты</span></span></li>
        <li class="sub"><span class="vis"></span><i class="tri"></i><svg class="i"><use href="#clip"/></svg>Сопряжения</li>
      </ul>
    </div>

    <div class="vbar">
      <span class="grip"><i></i></span>
      <div><button aria-label="Контур"><svg class="i"><use href="#t1"/></svg></button><button aria-label="Вид"><svg class="i"><use href="#t2"/></svg></button></div>
      <div class="wide"><button aria-label="Масштаб"><svg class="i"><use href="#t3"/></svg></button><button aria-label="Еще"><i class="caret"></i></button><button aria-label="Нормально к"><svg class="i"><use href="#t4"/></svg></button><button aria-label="Ориентация"><svg class="i"><use href="#t5"/></svg></button><button aria-label="Еще"><i class="caret"></i></button></div>
      <div><button class="on" aria-label="Полутоновое"><svg class="i big"><use href="#cube"/></svg></button><button aria-label="Каркас"><svg class="i"><use href="#cubew"/></svg></button><button aria-label="Еще"><i class="caret"></i></button></div>
      <div><button aria-label="Скрыть"><svg class="i"><use href="#eyeoff"/></svg></button><button aria-label="Еще"><i class="caret"></i></button><button aria-label="Показать"><svg class="i"><use href="#t6"/></svg></button><button aria-label="Еще"><i class="caret"></i></button></div>
      <div class="wide"><button class="on" aria-label="Точки"><svg class="i"><use href="#t7"/></svg></button><button aria-label="Размеры"><svg class="i"><use href="#t8"/></svg></button><button class="on" aria-label="Сечение"><svg class="i"><use href="#t9"/></svg></button><button aria-label="Профиль"><svg class="i"><use href="#t10"/></svg></button></div>
      <div class="dark"><button class="on" aria-label="Фильтр"><svg class="i"><use href="#funnel"/></svg></button><button class="on" aria-label="Еще"><i class="caret"></i></button></div>
      <div class="wide"><button aria-label="Измерить"><svg class="i"><use href="#t11"/></svg></button><button class="off" aria-label="Пипетка"><svg class="i"><use href="#pip"/></svg></button></div>
    </div>

    <form class="dialog">
      <h3>Параметры отображения</h3>
      <fieldset>
        <legend>Глубина просмотра</legend>
        <div class="row"><span class="combo"><select aria-label="Глубина просмотра"><option>В плоскости экрана</option></select><svg class="i" viewBox="0 0 16 16"><path d="M4 6l4 4 4-4"/></svg></span>
          <button type="button" class="sq" aria-label="Сечение"><svg viewBox="0 0 24 24"><path d="M10 2l10 3v13l-4 2V7l-8-3z" fill="#2860c8"/><path d="M3 5l10 3 8-5v15l-5 1v3L3 17z" fill="#e8503c"/><path d="M3 5l10 4v11M13 9l7-5M3 5l5-3M3 17l5-3V9" stroke="#222" fill="none"/></svg></button></div>
        <div class="row sl"><div class="slider"><span class="ticks"></span><input type="range" min="0" max="100" value="0" aria-label="Глубина, %"><span class="ticks"></span></div><label><input type="text" value="0">  %</label></div>
        <label class="row dist">Расстояние от плоскости, [мм]<input type="text" value="-433.0000"></label>
        <label class="chk"><input type="checkbox">Результаты в сечении</label>
        <label class="chk"><input type="checkbox">Инвертировать вид</label>
      </fieldset>
      <fieldset class="flt">
        <legend>Фильтры вида</legend>
        <div class="btns">
          <button type="button" class="sq sel" aria-label="Экстремумы"><svg viewBox="0 0 24 24"><path d="M1 1h22v3H1z" fill="#e03c32"/><path d="M1 20h22v3H1z" fill="#2860c8"/><text x="12" y="17">EXT</text></svg></button>
          <button type="button" class="sq sel" aria-label="Выноски"><svg viewBox="0 0 24 24"><path d="M2 23L8 13h15" stroke="#e03c32" stroke-width="2" fill="none"/><text class="sm" x="14" y="11">123</text></svg></button>
          <button type="button" class="sq" aria-label="Деформации"><svg viewBox="0 0 26 26"><g fill="none" stroke-width="1.500"><path d="M2 24Q13-22 24 24" stroke="#e04c42"/><path d="M2 24Q13-8 24 24" stroke="#e0a030"/><path d="M2 24Q13 4 24 24" stroke="#50a060"/><path d="M2 24Q13 15 24 24" stroke="#4878c8"/></g></svg></button>
          <button type="button" class="sq" aria-label="Сетка деформированная"><svg viewBox="0 0 26 26"><path d="M2 23L7 8h10l-2 14zM7 8l4-6 14-1-8 7M25 1l-3 12-7 9M5 15l12-1 7-7M12 8L8 22M11 5h11M16 2l-4 6M2 23l6-8 7 7M7 8l5 6M12 8l5 6 4-9 1 8" fill="none" stroke="#333" stroke-width="1.200"/></svg></button>
          <button type="button" class="sq" aria-label="Сетка"><svg viewBox="0 0 26 26"><path d="M1 8v16l6-8v8l7-8v8M1 8h13v16M1 8l7-6h17l-11 6M25 2v12l-11 10M1 8l6 8V8l7 8M1 16h13l11-8M19 5v14M14 8l5 3 6-9M14 16l5 3 6-11M4 5h16M16 2L7 8" fill="none" stroke="#333" stroke-width="1.200"/></svg></button>
          <button type="button" class="sq" aria-label="Шкала"><svg viewBox="0 0 26 26"><path d="M1 1h9v4H1z" fill="#e05040"/><path d="M1 5h9v4H1z" fill="#e89020"/><path d="M1 9h9v4H1z" fill="#e8dc20"/><path d="M1 13h9v4H1z" fill="#60a870"/><path d="M1 17h9v4H1z" fill="#80a0d8"/><path d="M1 21h9v4H1z" fill="#2860c8"/><path d="M11 5l14 8-14 8z" fill="#111"/></svg></button>
        </div>
      </fieldset>
      <div class="range"><span>Диапазон отображения КЭ</span><hr><button type="button" class="rnd" aria-label="Развернуть"><svg class="i" viewBox="0 0 16 16"><path d="M4 6l4 4 4-4" stroke-width="1.800"/></svg></button></div>
    </form>

    <div class="legend">
      <p class="lt">USUM[мм]</p>
      <div class="brand"><svg viewBox="0 0 24 18"><path d="M0 0h24v6H0z" fill="#3cc0a8"/><path d="M0 6h24v4H0z" fill="#28a0c0"/><path d="M0 10h3l-3 8zM24 10h-3l3 8zM5 10h6l-3 5-1 3zM13 10h6l-3 8z" fill="#2050a0"/><path d="M12 2l-4 9h8z" fill="#74aee4"/></svg><b>АПМ</b></div>
      <div class="scale">
        <div class="bar"><i style="background:#f00"></i><i style="background:#f40"></i><i style="background:#f80"></i><i style="background:#fc0"></i><i style="background:#ef0"></i><i style="background:#af0"></i><i style="background:#6f0"></i><i style="background:#2f0"></i><i style="background:#0f2"></i><i style="background:#0f6"></i><i style="background:#0fa"></i><i style="background:#0fe"></i><i style="background:#0cf"></i><i style="background:#08f"></i><i style="background:#04f"></i><i style="background:#00f"></i></div>
        <ol><li>0.1431</li><li>0.1341</li><li>0.1252</li><li>0.1163</li><li>0.1073</li><li>0.09837</li><li>0.08942</li><li>0.08048</li><li>0.07154</li><li>0.0626</li><li>0.05365</li><li>0.04471</li><li>0.03577</li><li>0.02683</li><li>0.01788</li><li>0.008942</li><li class="z">0</li></ol>
      </div>
    </div>
  </section>
</main>
</body>
</html>
```
FILE: styles.css
```css
*{box-sizing:border-box}
body{margin:0;height:100vh;display:flex;flex-direction:column;overflow:hidden;font:11px/14px "Noto Sans","Open Sans",sans-serif;color:#333;background:#f2f2f2}
button{font:inherit;color:inherit;background:none;border:0;padding:0;margin:0}
ul,ol{list-style:none;margin:0;padding:0}
.sprite{position:absolute;width:0;height:0}
.i{width:16px;height:16px;flex:none;fill:none;stroke:currentColor;overflow:visible}
.i.big{width:19px;height:19px}
.flip{transform:scaleX(-1)}
.caret{width:0;height:0;border:4px solid transparent;border-top:5px solid #333;border-bottom:0;flex:none}
.dots{width:5px;height:9px;flex:none;background:repeating-linear-gradient(#666 0 1px,transparent 1px 3px);-webkit-mask:linear-gradient(90deg,#000 2px,transparent 2px 3px,#000 3px)}

.menubar{display:flex;align-items:center;height:24px;background:#e4e4e4;padding-left:3px;color:#4a4a4a}
.logo{width:20px;height:21px;fill:none;margin-right:3px}
.menubar>button{padding:0 7px 0 6px}
.menubar>button+button{margin-left:1px}
.winctl{margin-left:auto;display:flex;align-items:center;gap:10px;padding-right:6px;color:#333}
.search{display:flex;align-items:center;gap:6px;width:190px;height:22px;padding:0 6px;border:1px solid #b0b0b0;background:#f8f8f8;color:#999}
.search input{font:12px "Noto Sans",sans-serif;border:0;background:none;width:160px;padding:0;outline:0}
.search input::placeholder{color:#a0a0a0}
.wb{margin-left:4px}
.tabs{display:flex;height:27px;background:#b1b1b1;border-top:1px solid #686868;border-bottom:6px solid #686868}
.home{display:flex;align-items:center;gap:11px;width:47px;background:#c4c4c4;padding-left:5px;border-left:1px solid #686868}
.tab{display:flex;align-items:center;gap:5px;background:#686868;color:#fff;width:169px;padding-left:5px}
.tab b{margin-left:3px;font:700 11px "DejaVu Sans",sans-serif}

.ribbon{display:flex;height:93px;border-bottom:1px solid #686868}
.ribbon section{display:flex;flex-direction:column;border-right:1px solid #b4b4b4;flex:none}
.ribbon footer{display:flex;align-items:center;height:17px;background:#e4e4e4;font-size:10px;padding:0 5px 0 0;gap:7px}
.ribbon footer span{flex:1;text-align:center;white-space:nowrap}
.ribbon .long{gap:1px;padding-right:2px}
.modes{width:121px}
.modes button{height:25px;display:flex;align-items:center;gap:6px;padding:0 0 1px 5px}
.modes .on{background:#4c4c4c;color:#fff}
.ribbon .modes footer{justify-content:center;padding:0}
.w1{width:27px}.w2{width:79px}.w3{width:121px}.w6{width:241px}.w9{width:361px}
.cells{flex:1;display:grid;grid-template-rows:repeat(3,25px);grid-auto-flow:column;grid-auto-columns:120px}
.cells button{display:flex;align-items:center;gap:4px;padding:0 0 1px 6px;text-align:left;line-height:11px;white-space:nowrap;overflow:hidden}
.ic3{flex:1;display:grid;grid-template:repeat(3,25px)/repeat(auto-fill,26px)}
.ic3 button{display:flex;align-items:center;justify-content:center}
.ribbon .w1 footer{padding-left:4px}
.off{color:#c4c4c4}
.ic3 .ds{font:700 13px "Open Sans",sans-serif}
.ic3 .stl{flex-direction:column;font:700 9px/8px "Open Sans",sans-serif}
.ic3 .stl .i{width:8px;height:8px;margin-right:6px}
.ribbon .rest{flex:1;border:0;justify-content:flex-end}

main{flex:1;display:flex;min-height:0}
.strip{width:27px;background:#ccc;border-right:1px solid #686868;display:flex;flex-direction:column;flex:none}
.strip button{height:25px;display:flex;align-items:center;justify-content:center;background:#f2f2f2}
.strip .on{background:#4c4c4c;color:#fff}
.strip .fx{font:17px "Open Sans",sans-serif}
.fx sub{font-size:12px}
.panel{width:311px;flex:none;display:flex;flex-direction:column;border-right:1px solid #686868;background:#f2f2f2}
.panel h2{margin:0;height:17px;font:inherit;display:flex;align-items:center;justify-content:space-between;background:#c9c9c9;border-bottom:1px solid #686868;padding:0 0 0 3px}
.panel h2 .i{width:13px;height:13px;margin-right:2px}
.pbody{flex:1;display:flex;justify-content:space-between;min-height:0;padding-left:4px}
.treebox{margin-top:9px;width:283px;border:1px solid #686868;border-bottom:0;background:#fff;color:#111;display:flex;flex-direction:column;overflow:hidden}
.tree{flex:1;overflow:hidden;padding-left:7px}
.tree ul{margin-left:19px}
.tree li{position:relative;white-space:nowrap}
.tree div{display:flex;align-items:center;height:18px;gap:5px}
.tree div .i{margin-left:1px}
.tree li li::before{content:"";position:absolute;left:4px;top:0;bottom:0;border-left:1px dotted #808080}
.tree li li:last-child::before{bottom:auto;height:9px}
.tree div::before{content:"";position:absolute;left:4px;top:9px;width:10px;border-top:1px dotted #808080}
.ex{width:9px;height:9px;flex:none;position:relative}
.ex.m{background:linear-gradient(#44a,#44a) center/5px 1px no-repeat #f4f4f4;border:1px solid #909090;border-radius:1px}
.ex.p{background:linear-gradient(#44a,#44a) center/5px 1px no-repeat,linear-gradient(#44a,#44a) center/1px 5px no-repeat #f4f4f4}
.hscroll{height:8px;background:#f0f0f0;padding:6px 0 0 17px}
.hscroll::before{content:"";display:block;width:129px;height:2px;background:#8a8a8a}
.vscroll{width:8px;background:#bcbcbc;margin:5px 1px 0 0}

.view{flex:1;position:relative;min-width:0;overflow:hidden;background:linear-gradient(#69a4e1,#a9cdf0 38%,#d6e6f6 74%,#fff);display:flex;justify-content:center;align-items:flex-start}
.scene{position:absolute;inset:0;width:100%;height:100%}
.mark text{font:24px "Open Sans",sans-serif;fill:#000}
.axis text{font:12px "DejaVu Sans",sans-serif}

.mtree{position:absolute;left:5px;top:26px}
.mt-tools{display:flex;gap:5px}
.mt-tools button{height:25px;display:flex;align-items:center}
.mt-tools .on{width:26px;justify-content:center;background:#4c4c4c;color:#fff}
.mtree ul{padding-top:4px}
.mtree li{display:flex;align-items:center;height:26px;gap:2px;white-space:nowrap}
.vis{width:32px;display:flex}
.sub .vis{width:42px}
.tri{width:0;height:0;border:3px solid transparent;border-left:5px solid #333;border-right:0;margin-right:4px}
.tri.d{border:3px solid transparent;border-top:5px solid #333;border-bottom:0}
.mtree small{font-size:12px}
.dim{display:flex;gap:2px;align-items:center;color:#858585}

.vbar{position:relative;display:flex;height:26px;border:1px solid #686868;border-top:0;background:#f4f4f4}
.grip{width:15px;background:#e4e4e4;padding:4px 2px}
.grip i{display:block;height:5px;background:repeating-linear-gradient(90deg,#555 0 2px,transparent 2px 3px);-webkit-mask:linear-gradient(#000 2px,transparent 2px 3px,#000 3px)}
.vbar div{display:flex;border-left:1px solid #686868}
.vbar button{width:27px;display:flex;align-items:center;justify-content:center}
.vbar div:nth-child(3) button{width:25px}
.vbar div:nth-child(4) button{width:25px}
.vbar .on{background:#4c4c4c;color:#fff}
.vbar .on .caret{border-top-color:#fff}
.vbar div:nth-child(5) button{width:24px}
.vbar .dark button{width:24px}
.vbar .off{color:#c4c4c4}

.dialog{position:absolute;right:155px;top:1px;width:244px;height:280px;border-radius:8px;background:#f0f0f0;box-shadow:0 4px 22px rgba(0,0,0,.4);color:#000;font:11px/14px Roboto,"Noto Sans",sans-serif;overflow:hidden}
.dialog h3{margin:0;height:30px;padding:8px;background:#f1f3f9;font:11px/14px "Noto Sans",sans-serif}
.dialog fieldset{margin:0 0 0 5px;border:1px solid #dcdcdc;border-right:0;padding:2px 0 0 10px;height:169px}
.dialog legend{padding:0 3px;margin-left:-4px;font:inherit}
.row{display:flex;align-items:center}
.combo{display:flex;align-items:center;width:177px;height:24px;border:1px solid #707070;background:#fff;padding:2px}
.combo select{appearance:none;width:154px;height:18px;border:1px dotted #e08020;font:inherit;padding:0 2px;color:#000;background:#fff;outline:0}
.combo .i{margin-left:3px}
.row .sq{margin-left:11px}
.sq{width:28px;height:28px;border:1px solid #ccc;border-radius:4px;background:#fcfcfc;padding:1px}
.sq svg{width:24px;height:24px;display:block}
.sq.sel{background:#cce0f4;border-color:#0a5aa8}
.sq text{font:700 13px "Open Sans",sans-serif;text-anchor:middle;fill:#222}
.sq .sm{font-size:10px}
.sl{margin-top:8px}
.slider{width:164px;display:grid;gap:3px}
.ticks{height:3px;margin:0 5px;background:repeating-linear-gradient(90deg,#c0c0c0 0 1px,transparent 1px 15px)}
.slider input{appearance:none;margin:0;width:164px;height:21px;background:linear-gradient(#d0d0d0,#d0d0d0) 0 9px/100% 1px no-repeat,linear-gradient(#d0d0d0,#d0d0d0) 0 12px/100% 1px no-repeat}
.slider input::-webkit-slider-thumb{appearance:none;width:10px;height:21px;background:#0078d7}
.dialog input[type=text]{font:11px "Noto Sans",sans-serif;border:1px solid #e4e4e4;border-bottom-color:#808080;background:#fff;width:31px;height:23px;padding:0 4px}
.sl label{margin-left:14px;white-space:pre}
.dialog .dist{margin:11px 0 6px -4px;justify-content:space-between;padding-right:10px}
.dialog .dist input{width:48px;height:23px;padding:0 1px 0 4px}
.chk{display:flex;align-items:center;gap:2px;height:19px}
.chk input{appearance:none;width:13px;height:13px;margin:0;border:1px solid #666;border-radius:3px;background:#f6f6f6}
.dialog .flt{height:56px;margin-top:2px;padding-top:3px}
.btns{display:flex;gap:9px}
.range{display:flex;align-items:center;padding:0 17px 0 16px;height:22px}
.range hr{flex:1;border:0;height:1px;background:#000;margin:0 3px 0 11px}
.rnd{width:15px;height:15px;border:1px solid #aaa;border-radius:8px;background:#e4e4e4}
.rnd .i{width:11px;height:11px;display:block;margin:1px}

.legend{position:absolute;right:52px;top:43px;width:92px;color:#000;font:12px/14px "Liberation Sans",sans-serif}
.lt{margin:0}
.brand{display:flex;align-items:center;gap:7px;height:18px;margin:11px 0 11px 5px}
.brand svg{width:24px;height:18px}
.brand b{font:22px "DejaVu Sans",sans-serif;color:#204080;-webkit-text-stroke:1px #204080}
.scale{display:flex;gap:9px;padding-left:3px}
.bar{width:27px;border:1px solid #000;border-top-width:2px;display:grid;height:387px}
.legend li{height:24px}
.legend ol{margin-top:-3px}
.z{padding-left:5px}
```
